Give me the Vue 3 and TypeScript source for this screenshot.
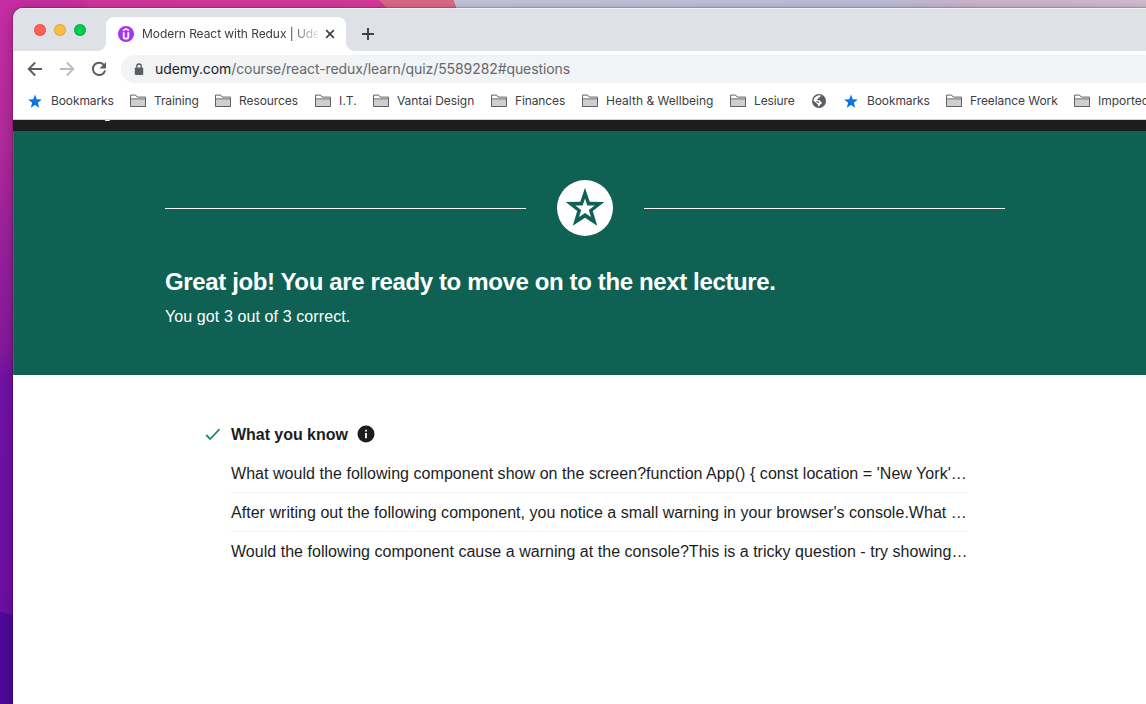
<script setup lang="ts">
interface Bookmark {
  label: string
  kind: 'star' | 'folder' | 'globe'
  width: number
  spacing: number
}

const bookmarks: Bookmark[] = [
  { label: 'Bookmarks', kind: 'star', width: 102, spacing: -0.1 },
  { label: 'Training', kind: 'folder', width: 85, spacing: -0.12 },
  { label: 'Resources', kind: 'folder', width: 100, spacing: -0.08 },
  { label: 'I.T.', kind: 'folder', width: 58, spacing: 0.2 },
  { label: 'Vantai Design', kind: 'folder', width: 118, spacing: -0.05 },
  { label: 'Finances', kind: 'folder', width: 91, spacing: -0.12 },
  { label: 'Health & Wellbeing', kind: 'folder', width: 148, spacing: 0.02 },
  { label: 'Lesiure', kind: 'folder', width: 82, spacing: -0.1 },
  { label: '', kind: 'globe', width: 32, spacing: 0 },
  { label: 'Bookmarks', kind: 'star', width: 102, spacing: -0.1 },
  { label: 'Freelance Work', kind: 'folder', width: 128, spacing: -0.07 },
  { label: 'Imported', kind: 'folder', width: 90, spacing: 0 },
]

const questions = [
  { text: "What would the following component show on the screen?function App() { const location = 'New York'…", spacing: 0.045 },
  { text: "After writing out the following component, you notice a small warning in your browser's console.What …", spacing: 0.035 },
  { text: 'Would the following component cause a warning at the console?This is a tricky question - try showing…', spacing: 0.03 },
]
</script>

<template>
  <div class="desktop">
    <svg class="wallpaper" width="1146" height="704" viewBox="0 0 1146 704">
      <defs>
        <linearGradient id="side" x1="0" y1="0" x2="0" y2="1">
          <stop offset="0" stop-color="#c82da6" />
          <stop offset=".2" stop-color="#b42a9c" />
          <stop offset=".32" stop-color="#9f229d" />
          <stop offset=".5" stop-color="#85199c" />
          <stop offset=".54" stop-color="#7311a6" />
          <stop offset="1" stop-color="#6d0ea4" />
        </linearGradient>
        <linearGradient id="top" x1="0" y1="0" x2="1" y2="0">
          <stop offset="0" stop-color="#c42da6" />
          <stop offset=".22" stop-color="#cf319f" />
          <stop offset=".23" stop-color="#d5369f" />
          <stop offset="1" stop-color="#d93a9b" />
        </linearGradient>
        <linearGradient id="sky" x1="0" y1="0" x2="1" y2="0">
          <stop offset="0" stop-color="#c7c7df" />
          <stop offset=".62" stop-color="#bfc0da" />
          <stop offset=".73" stop-color="#ceb9d2" />
          <stop offset=".88" stop-color="#d0bad1" />
          <stop offset="1" stop-color="#d7c1d4" />
        </linearGradient>
      </defs>
      <rect width="20" height="704" fill="url(#side)" />
      <rect width="390" height="20" fill="url(#top)" />
      <path d="M379 0H454L461 20H399Z" fill="#df6b88" />
      <path d="M454 0H1146V20H461Z" fill="url(#sky)" />
      <path d="M0 612L20 617V704H0Z" fill="#4d099b" />
    </svg>
    <div class="window">
      <header class="tabstrip">
        <div class="lights"><i class="red" /><i class="amber" /><i class="green" /></div>
        <div class="tab">
          <svg class="favicon" width="16" height="16" viewBox="0 0 16 16">
            <circle cx="8" cy="8" r="8" fill="#a435f0" />
            <path d="M5 4.5L8 2.8l3 1.7" fill="none" stroke="#fff" stroke-width="1.5" />
            <path d="M5.7 6.2v4.2a2.3 2.3 0 0 0 4.6 0V6.2" fill="none" stroke="#fff" stroke-width="1.8" />
          </svg>
          <span class="tab-title">Modern React with Redux | Udemy</span>
          <svg class="close" width="16" height="16" viewBox="0 0 16 16"><path d="M4.2 4.2l7.6 7.6M11.8 4.2l-7.6 7.6" stroke="#3c4043" stroke-width="1.7" /></svg>
        </div>
        <svg class="plus" width="14" height="14" viewBox="0 0 14 14"><path d="M7 1v12M1 7h12" stroke="#3c4043" stroke-width="1.9" /></svg>
      </header>

      <div class="toolbar">
        <svg class="nav" width="16" height="16" viewBox="0 0 16 16"><path d="M15 8H2M8.2 1.5L1.7 8l6.5 6.5" fill="none" stroke="#5b5e63" stroke-width="1.9" /></svg>
        <svg class="nav" width="16" height="16" viewBox="0 0 16 16"><path d="M1 8h13M7.8 1.5L14.3 8l-6.5 6.5" fill="none" stroke="#babcbe" stroke-width="1.9" /></svg>
        <svg class="nav" width="16" height="16" viewBox="0 0 16 16"><path d="M13.4 4.6A6.2 6.2 0 1 0 14.1 9.5" fill="none" stroke="#5b5e63" stroke-width="2" /><path d="M15 .9v6.5H8.5Z" fill="#5b5e63" /></svg>
        <div class="omnibox">
          <svg class="lock" width="10" height="13" viewBox="0 0 10 13"><rect x=".8" y="4.6" width="8.4" height="7.4" rx="1" fill="#5b5e63" /><path d="M2.8 5V3.2a2.2 2.2 0 0 1 4.4 0V5" fill="none" stroke="#5b5e63" stroke-width="1.3" /></svg>
          <span class="url"><b>udemy.com</b>/course/react-redux/learn/quiz/5589282#questions</span>
        </div>
      </div>

      <nav class="bookmarks">
        <div v-for="(item, i) in bookmarks" :key="i" class="bookmark" :style="{ width: item.width + 'px' }">
          <svg v-if="item.kind === 'star'" width="15" height="15" viewBox="0 0 15 15"><path d="M7 .6l1.75 4.75 5.05.22-3.95 3.2 1.35 4.9L7 10.9l-4.2 2.77 1.35-4.9L.2 5.57l5.05-.22Z" fill="#0b73e8" /></svg>
          <svg v-else-if="item.kind === 'folder'" width="16" height="14" viewBox="0 0 16 14"><path d="M.5 12.5V1.1h5.2l1.5 2h8.3v9.4Z" fill="#fff" stroke="#606164" /><path d="M1 5.2h14v7H1Z" fill="#cfcfd1" /><path d="M.5 4.9h15M.5 12.5h15" stroke="#606164" /></svg>
          <svg v-else width="14" height="14" viewBox="0 0 14 14"><circle cx="7" cy="7" r="7" fill="#5b5e63" /><path d="M8.3 1.3C9.2 2.5 8 3.6 6.4 3.8c-.2 1-.6 1.5-1.7 1.7.1.9 2.6.5 3.3 1.1.5.6.4 1.2 1.3 1.5 1 .5.7 1.5-.3 1.9-.8.3-1 1.2-2.3 2.6-.8-.8-.4-1.9-1.3-2.6C4.300 9.200 3.400 8 1.500 6.700 1.500 4 4.500 1.200 8.300 1.300Z" fill="#fff" /><path d="M4.300 8.100c1.200-.5 2.400.2 2.500 1M8.700 4.700c1 .7 2 .9 3.400.8" fill="none" stroke="#5b5e63" stroke-width="1.100" /></svg>
          <span v-if="item.label" :style="{ letterSpacing: item.spacing + 'px' }">{{ item.label }}</span>
        </div>
      </nav>

      <div class="course-header"><span>g</span></div>
      <section class="result">
        <div class="divider">
          <hr />
          <svg width="56" height="56" viewBox="0 0 56 56"><circle cx="28" cy="28" r="28" fill="#fff" /><path fill-rule="evenodd" d="M28 7.8L32.700 21.700 47.300 21.900 35.800 30.900 40.200 45.700 28 37.700 15.800 45.700 20.200 30.900 8.700 21.900 23.300 21.700ZM28 18.400L25.700 25.500 18.300 25.600 24.200 30.100 22 37.100 28 33 34 37.100 31.800 30.100 37.700 25.600 30.300 25.500Z" fill="#0f6153" /></svg>
          <hr />
        </div>
        <h1>Great job! You are ready to move on to the next lecture.</h1>
        <p>You got 3 out of 3 correct.</p>
      </section>

      <main class="review">
        <div class="heading">
          <svg class="check" width="16" height="14" viewBox="0 0 16 14"><path d="M1.200 8l4 4L14.500 2.200" fill="none" stroke="#1b8a75" stroke-width="1.800" /></svg>
          <h2>What you know</h2>
          <svg class="info" width="18" height="18" viewBox="0 0 18 18"><circle cx="9" cy="9" r="8.500" fill="#1c1d1f" /><path d="M8.100 4.700h1.800v1.800H8.100zM8.100 7.900h1.800v5.300H8.100z" fill="#fff" /></svg>
        </div>
        <ul>
          <li v-for="q in questions" :key="q.text"><span :style="{ letterSpacing: q.spacing + 'px' }">{{ q.text }}</span></li>
        </ul>
      </main>
    </div>
  </div>
</template>

<style>
body { margin: 0; overflow: hidden; }
</style>

<style scoped>
* { box-sizing: border-box; }
.desktop { position: relative; width: 1146px; height: 704px; overflow: hidden; padding: 8px 0 0 13px; font-family: Inter, Roboto, sans-serif; }
.wallpaper { position: absolute; left: 0; top: 0; }
svg { display: block; flex: none; }
.window { position: relative; width: 1145px; height: 720px; background: #fff; border-radius: 10px 0 0; overflow: hidden; box-shadow: 0 0 0 1px rgba(0,0,0,.16), 0 2px 16px rgba(0,0,0,.28); }
.tabstrip { height: 43px; background: #dee1e6; display: flex; box-shadow: inset 0 1px #f0f1f4; }
.lights { display: flex; gap: 8px; padding: 16px 0 0 21px; width: 93px; }
.lights i { width: 12px; height: 12px; border-radius: 50%; border: 1px solid rgba(0,0,0,.13); }
.red { background: #ff5f57; }
.amber { background: #febc40; }
.green { background: #00ca4e; }
.tab { position: relative; width: 240px; height: 34px; margin-top: 9px; border-radius: 8px 8px 0 0; background: #fff; display: flex; align-items: center; padding-left: 12px; }
.tab::before, .tab::after { content: ''; position: absolute; bottom: 0; width: 8px; height: 8px; }
.tab::before { left: -8px; background: radial-gradient(circle at 0 0, transparent 7.5px, #fff 8px); }
.tab::after { right: -8px; background: radial-gradient(circle at 100% 0, transparent 7.5px, #fff 8px); }
.tab-title { width: 176px; margin-left: 8px; overflow: hidden; white-space: nowrap; font-size: 12px; line-height: 16px; letter-spacing: -.06px; color: #3c4043; mask-image: linear-gradient(90deg, #000 148px, transparent 180px); }
.close { margin-left: 4px; }
.plus { margin: 19px 0 0 15px; }
.toolbar { height: 36px; display: flex; align-items: center; gap: 16px; padding-left: 14px; }
.omnibox { width: 1070px; height: 28px; border-radius: 14px; background: #f1f3f4; display: flex; align-items: center; padding-left: 13px; margin-left: -2px; }
.url { margin-left: 11px; font-size: 14px; line-height: 20px; letter-spacing: -.087px; color: #65686c; white-space: nowrap; }
.url b { font-weight: 400; color: #202124; }
.bookmarks { height: 33px; display: flex; align-items: flex-start; padding: 5px 0 0 15px; border-bottom: 1px solid #cfd1d4; }
.bookmark { height: 18px; display: flex; flex: none; align-items: center; gap: 8px; white-space: nowrap; font-size: 12px; line-height: 18px; color: #3c4043; }
.course-header { height: 11px; background: #1c1d1f; overflow: hidden; color: #fff; font: 16px/16px "Liberation Sans", sans-serif; padding-left: 90px; }
.course-header span { display: block; margin-top: -15px; }
.result { height: 244px; background: #0f6153; padding: 49px 141px 0 151px; color: #fff; border-left: 1px solid #28786a; font-family: "Liberation Sans", sans-serif; }
.divider { display: flex; align-items: center; width: 840px; gap: 31px; }
.divider hr { flex: 1; height: 1px; border: 0; margin: 0; background: #fff; }
.result h1 { font-size: 24px; line-height: 30px; letter-spacing: -.37px; margin: 31px 0 0; white-space: nowrap; }
.result p { font-size: 16px; line-height: 22px; letter-spacing: .1px; margin: 9px 0 0; }
.review { padding: 48px 0 0 192px; color: #1c1d1f; font-family: "Liberation Sans", sans-serif; }
.heading { display: flex; align-items: center; height: 22px; }
.heading h2 { width: 117px; margin: 0 9px 0 10px; padding-top: 2px; font-size: 16px; line-height: 22px; letter-spacing: -.04px; white-space: nowrap; }
ul { list-style: none; padding: 0; margin: 9px 0 0 26px; width: 736px; }
li { height: 39px; padding-top: 9px; font-size: 16px; line-height: 22px; white-space: nowrap; border-bottom: 1px solid #f3f4f5; }
li:last-child { border: 0; }
</style>
